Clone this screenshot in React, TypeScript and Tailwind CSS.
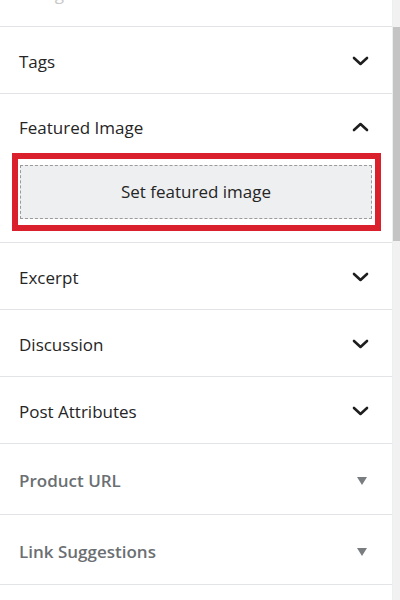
import React from 'react'

function ChevronDown(): React.ReactElement {
  return (
    <svg className="h-[10px] w-[17px]" viewBox="0 0 17 10" fill="none">
      <path d="M2 2l6.5 6 6.5-6" stroke="#1e1e1e" strokeWidth={2.6} strokeLinecap="round" strokeLinejoin="round" />
    </svg>
  )
}

function ChevronUp(): React.ReactElement {
  return (
    <svg className="h-[10px] w-[17px]" viewBox="0 0 17 10" fill="none">
      <path d="M2 8l6.5-6 6.5 6" stroke="#1e1e1e" strokeWidth={2.6} strokeLinecap="round" strokeLinejoin="round" />
    </svg>
  )
}

function Caret(): React.ReactElement {
  return (
    <svg className="h-[8px] w-[10px]" viewBox="0 0 10 8">
      <path d="M0 0h10L5 8z" fill="#7a7d80" />
    </svg>
  )
}

type RowProps = {
  title: string
  height: string
  muted?: boolean
}

function PanelRow({ title, height, muted }: RowProps): React.ReactElement {
  return (
    <div className={`flex items-center justify-between border-b border-[#e2e4e7] pl-[19px] pr-[23px] pt-[4px] ${height}`}>
      <span
        className={
          muted
            ? 'text-[17px] font-semibold text-[#6b6f73]'
            : 'text-[17px] text-[#252525]'
        }
      >
        {title}
      </span>
      {muted ? (
        <span className="mr-[2px]"><Caret /></span>
      ) : (
        <span className="-mt-[3px]"><ChevronDown /></span>
      )}
    </div>
  )
}

export default function App(): React.ReactElement {
  return (
    <div
      className="flex h-[600px] w-[400px] overflow-hidden bg-white"
      style={{ fontFamily: '"Open Sans", "Noto Sans", sans-serif' }}
    >
      {/* Sidebar */}
      <div className="w-[393px] border-r border-[#eceeef]">
        {/* Cut-off section above */}
        <div className="h-[27px] overflow-hidden border-b border-[#e2e4e7] pl-[19px]">
          <div className="-mt-[19px] text-[17px] text-[#c8c8c8]">Categories</div>
        </div>

        <PanelRow title="Tags" height="h-[67px]" />

        {/* Featured Image */}
        <div className="border-b border-[#e2e4e7]">
          <div className="flex h-[59px] items-center justify-between pl-[19px] pr-[23px] pt-[9px]">
            <span className="text-[17px] text-[#252525]">Featured Image</span>
            <span className="-mt-[3px]"><ChevronUp /></span>
          </div>
          <div className="pb-[11px] pl-[12px] pr-[11px]">
            <div className="border-[6px] border-[#d9202c] px-[2px] py-[6px] pr-[3px]">
              <div className="flex h-[54px] items-center justify-center border border-dashed border-[#9a9a9a] bg-[#eeeff1] text-[17px] text-[#252525]">
                Set featured image
              </div>
            </div>
          </div>
        </div>

        <PanelRow title="Excerpt" height="h-[67px]" />
        <PanelRow title="Discussion" height="h-[67px]" />
        <PanelRow title="Post Attributes" height="h-[67px]" />
        <PanelRow title="Product URL" height="h-[71px]" muted />
        <PanelRow title="Link Suggestions" height="h-[70px]" muted />
      </div>

      {/* Scrollbar */}
      <div className="w-[7px] bg-[#f1f1f1] pt-[27px]">
        <div className="h-[214px] bg-[#c4c4c4]" />
      </div>
    </div>
  )
}
